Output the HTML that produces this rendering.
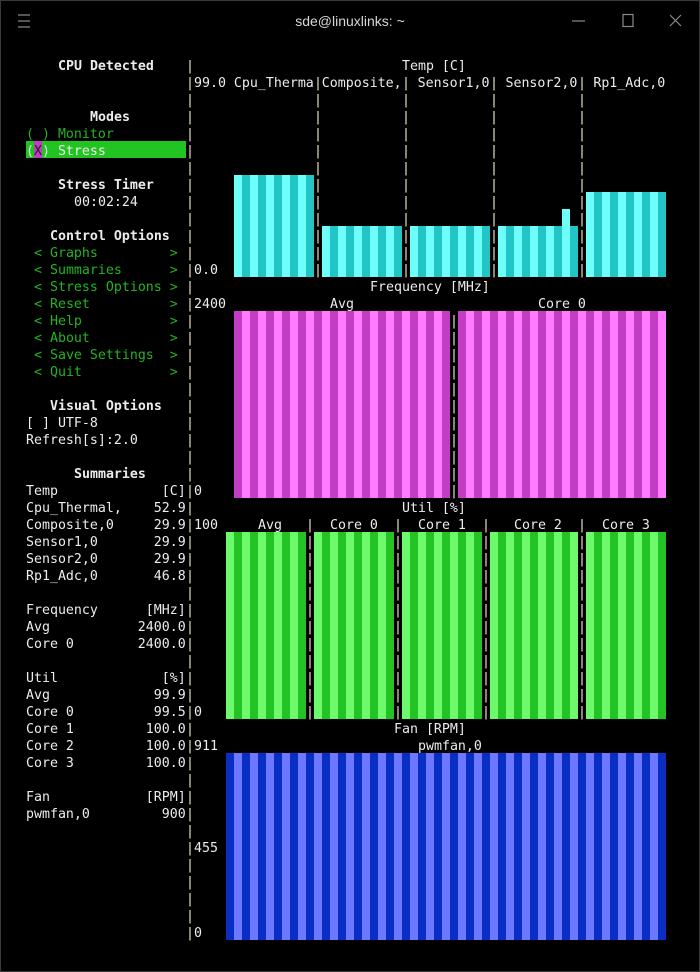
<!DOCTYPE html>
<html><head><meta charset="utf-8">
<style>
html,body{margin:0;padding:0;background:#000;}
body{width:700px;height:972px;position:relative;overflow:hidden;}
.win{position:absolute;left:0;top:0;width:698px;height:970px;border:1px solid #3a3a3a;}
.t{position:absolute;top:calc(58px + var(--r)*17px);left:calc(2px + var(--c)*8px);font-family:"DejaVu Sans Mono","Liberation Mono",monospace;font-size:13.28px;line-height:17px;height:17px;white-space:pre;color:#ececec;}
.b{font-weight:bold;}
.g{color:#22b422;}
.sep{color:#f0e6c8;}
.bar{position:absolute;top:calc(56px + var(--r1)*17px);height:calc((var(--r2) - var(--r1))*17px);left:calc(2px + var(--c1)*8px);width:calc((var(--c2) - var(--c1))*8px);}
.cy{background:repeating-linear-gradient(90deg,#6ffffb 0 8px,#22c5c5 8px 16px);}
.mg{background:repeating-linear-gradient(90deg,#c43bc4 0 8px,#ff7bff 8px 16px);}
.gr{background:repeating-linear-gradient(90deg,#6cfa6c 0 8px,#22c322 8px 16px);}
.bl{background:repeating-linear-gradient(90deg,#0a2dc4 0 8px,#6c78ff 8px 16px);}
.title{position:absolute;top:13px;left:0;width:700px;text-align:center;font-family:"Liberation Sans",sans-serif;font-size:14px;color:#d8d8d8;}
</style></head><body>
<div class="win"></div>
<div class="title">sde@linuxlinks: ~</div>
<svg style="position:absolute;left:0;top:0" width="700" height="40">
<g stroke="#8a8a8a" stroke-width="1.2" fill="none">
<path d="M18 15h12M18 21h12M18 27h12"/>
<path d="M572 21h13"/>
<rect x="623" y="14.5" width="10" height="12"/>
<path d="M670 15l11 11M681 15l-11 11"/>
</g></svg>

<div class="bar cy" style="--r1:7;--r2:13;--c1:29;--c2:39"></div>
<div class="bar cy" style="--r1:10;--r2:13;--c1:40;--c2:50"></div>
<div class="bar cy" style="--r1:10;--r2:13;--c1:51;--c2:61"></div>
<div class="bar cy" style="--r1:10;--r2:13;--c1:62;--c2:72"></div>
<div class="bar" style="--r1:9;--r2:10;--c1:70;--c2:71;background:#6ffffb"></div>
<div class="bar cy" style="--r1:8;--r2:13;--c1:73;--c2:83"></div>
<div class="bar mg" style="--r1:15;--r2:26;--c1:29;--c2:56"></div>
<div class="bar mg" style="--r1:15;--r2:26;--c1:57;--c2:83"></div>
<div class="bar gr" style="--r1:28;--r2:39;--c1:28;--c2:38"></div>
<div class="bar gr" style="--r1:28;--r2:39;--c1:39;--c2:49"></div>
<div class="bar gr" style="--r1:28;--r2:39;--c1:50;--c2:60"></div>
<div class="bar gr" style="--r1:28;--r2:39;--c1:61;--c2:72"></div>
<div class="bar gr" style="--r1:28;--r2:39;--c1:73;--c2:83"></div>
<div class="bar bl" style="--r1:41;--r2:52;--c1:28;--c2:83"></div>

<div class="bar" style="--r1:5;--r2:6;--c1:3;--c2:23;background:#22c422"></div>
<div class="bar" style="--r1:5;--r2:6;--c1:4;--c2:5;background:#c43bc4"></div>

<div class="t sep" style="--r:0;--c:23;height:auto">|
|
|
|
|
|
|
|
|
|
|
|
|
|
|
|
|
|
|
|
|
|
|
|
|
|
|
|
|
|
|
|
|
|
|
|
|
|
|
|
|
|
|
|
|
|
|
|
|
|
|
|</div>
<div class="t sep" style="--r:1;--c:39;height:auto">|
|
|
|
|
|
|
|
|
|
|
|</div>
<div class="t sep" style="--r:1;--c:50;height:auto">|
|
|
|
|
|
|
|
|
|
|
|</div>
<div class="t sep" style="--r:1;--c:61;height:auto">|
|
|
|
|
|
|
|
|
|
|
|</div>
<div class="t sep" style="--r:1;--c:72;height:auto">|
|
|
|
|
|
|
|
|
|
|
|</div>
<div class="t sep" style="--r:15;--c:56;height:auto">|
|
|
|
|
|
|
|
|
|
|</div>
<div class="t sep" style="--r:27;--c:38;height:auto">|
|
|
|
|
|
|
|
|
|
|
|</div>
<div class="t sep" style="--r:27;--c:49;height:auto">|
|
|
|
|
|
|
|
|
|
|
|</div>
<div class="t sep" style="--r:27;--c:60;height:auto">|
|
|
|
|
|
|
|
|
|
|
|</div>
<div class="t sep" style="--r:27;--c:72;height:auto">|
|
|
|
|
|
|
|
|
|
|
|</div>

<div class="t b" style="--r:0;--c:7">CPU Detected</div>
<div class="t b" style="--r:3;--c:11">Modes</div>
<div class="t g" style="--r:4;--c:3">( ) Monitor</div>
<div class="t" style="--r:5;--c:3">( ) Stress</div>
<div class="t" style="--r:5;--c:4;color:#222">X</div>
<div class="t b" style="--r:7;--c:7">Stress Timer</div>
<div class="t" style="--r:8;--c:9">00:02:24</div>
<div class="t b" style="--r:10;--c:6">Control Options</div>
<div class="t g" style="--r:11;--c:4">&lt; Graphs         &gt;</div>
<div class="t g" style="--r:12;--c:4">&lt; Summaries      &gt;</div>
<div class="t g" style="--r:13;--c:4">&lt; Stress Options &gt;</div>
<div class="t g" style="--r:14;--c:4">&lt; Reset          &gt;</div>
<div class="t g" style="--r:15;--c:4">&lt; Help           &gt;</div>
<div class="t g" style="--r:16;--c:4">&lt; About          &gt;</div>
<div class="t g" style="--r:17;--c:4">&lt; Save Settings  &gt;</div>
<div class="t g" style="--r:18;--c:4">&lt; Quit           &gt;</div>
<div class="t b" style="--r:20;--c:6">Visual Options</div>
<div class="t" style="--r:21;--c:3">[ ] UTF-8</div>
<div class="t" style="--r:22;--c:3">Refresh[s]:2.0</div>
<div class="t b" style="--r:24;--c:9">Summaries</div>
<div class="t" style="--r:25;--c:3">Temp             [C]</div>
<div class="t" style="--r:26;--c:3">Cpu_Thermal,    52.9</div>
<div class="t" style="--r:27;--c:3">Composite,0     29.9</div>
<div class="t" style="--r:28;--c:3">Sensor1,0       29.9</div>
<div class="t" style="--r:29;--c:3">Sensor2,0       29.9</div>
<div class="t" style="--r:30;--c:3">Rp1_Adc,0       46.8</div>
<div class="t" style="--r:32;--c:3">Frequency      [MHz]</div>
<div class="t" style="--r:33;--c:3">Avg           2400.0</div>
<div class="t" style="--r:34;--c:3">Core 0        2400.0</div>
<div class="t" style="--r:36;--c:3">Util             [%]</div>
<div class="t" style="--r:37;--c:3">Avg             99.9</div>
<div class="t" style="--r:38;--c:3">Core 0          99.5</div>
<div class="t" style="--r:39;--c:3">Core 1         100.0</div>
<div class="t" style="--r:40;--c:3">Core 2         100.0</div>
<div class="t" style="--r:41;--c:3">Core 3         100.0</div>
<div class="t" style="--r:43;--c:3">Fan            [RPM]</div>
<div class="t" style="--r:44;--c:3">pwmfan,0         900</div>

<div class="t" style="--r:0;--c:50">Temp [C]</div>
<div class="t" style="--r:1;--c:24">99.0 Cpu_Therma Composite,  Sensor1,0  Sensor2,0  Rp1_Adc,0</div>
<div class="t" style="--r:12;--c:24">0.0</div>
<div class="t" style="--r:13;--c:46">Frequency [MHz]</div>
<div class="t" style="--r:14;--c:24">2400</div>
<div class="t" style="--r:14;--c:41">Avg</div>
<div class="t" style="--r:14;--c:67">Core 0</div>
<div class="t" style="--r:25;--c:24">0</div>
<div class="t" style="--r:26;--c:50">Util [%]</div>
<div class="t" style="--r:27;--c:24">100</div>
<div class="t" style="--r:27;--c:32">Avg</div>
<div class="t" style="--r:27;--c:41">Core 0</div>
<div class="t" style="--r:27;--c:52">Core 1</div>
<div class="t" style="--r:27;--c:64">Core 2</div>
<div class="t" style="--r:27;--c:75">Core 3</div>
<div class="t" style="--r:38;--c:24">0</div>
<div class="t" style="--r:39;--c:49">Fan [RPM]</div>
<div class="t" style="--r:40;--c:24">911</div>
<div class="t" style="--r:40;--c:52">pwmfan,0</div>
<div class="t" style="--r:46;--c:24">455</div>
<div class="t" style="--r:51;--c:24">0</div>
</body></html>
